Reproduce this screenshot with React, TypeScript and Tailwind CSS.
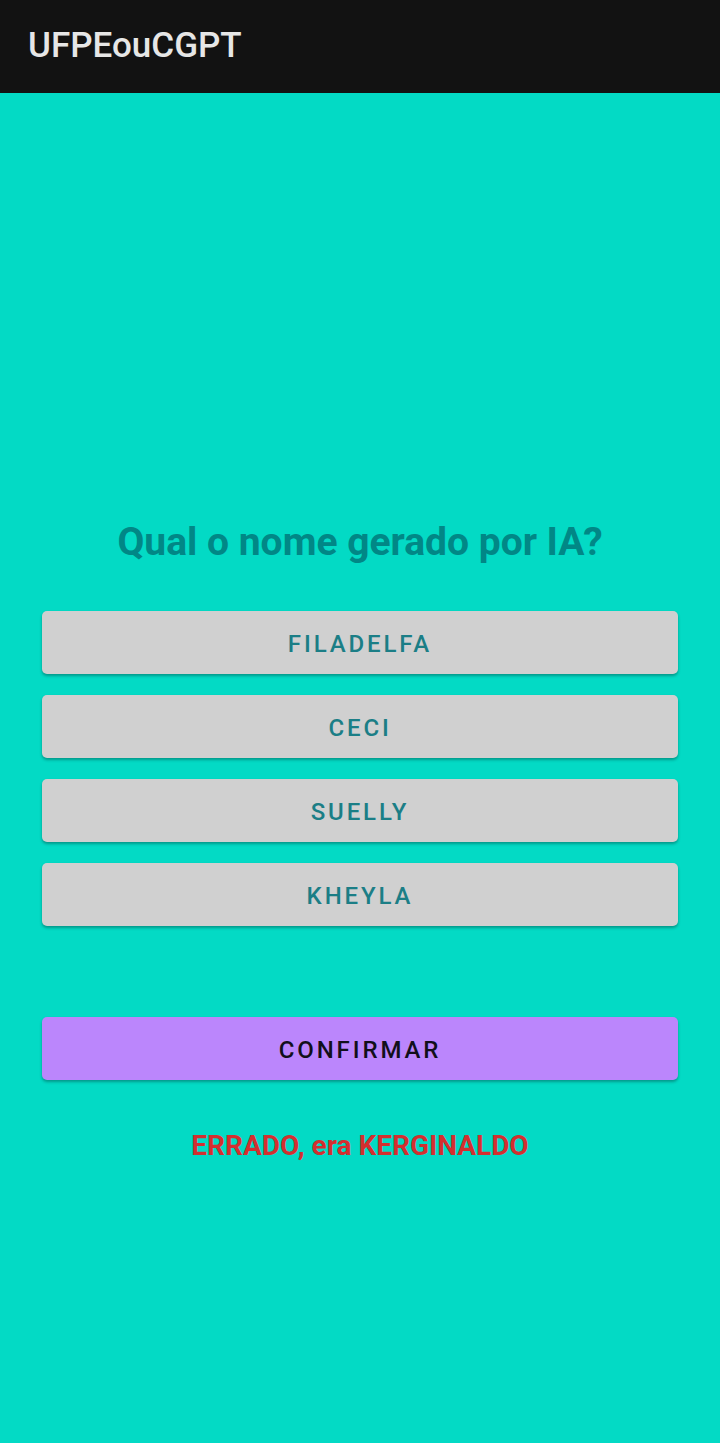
export default function App() {
  const options = ["FILADELFA", "CECI", "SUELLY", "KHEYLA"];

  return (
    <div className="flex min-h-[1443px] flex-col bg-[#03dac5] font-['Roboto',sans-serif]">
      <header className="flex h-[93px] items-center bg-[#121212] px-7">
        <h1 className="text-[35px] font-medium text-[#e6e6e6]">UFPEouCGPT</h1>
      </header>

      <main className="flex flex-col px-[42px] pt-[424px]">
        <h2 className="text-center text-[39px] font-bold leading-[50px] text-[#018786]">
          Qual o nome gerado por IA?
        </h2>

        <div className="mt-[44px] flex flex-col gap-[21px]">
          {options.map((name) => (
            <button
              key={name}
              className="h-[63px] rounded-[5px] bg-[#d0d0d0] pt-[3px] text-[24px] font-medium tracking-[0.12em] text-[#1b7e86] shadow-[0_2px_3px_rgba(0,0,0,0.3)]"
            >
              {name}
            </button>
          ))}
        </div>

        <button className="mt-[91px] h-[63px] rounded-[5px] bg-[#bb86fc] pt-[3px] text-[24px] font-medium tracking-[0.12em] text-[#120f1a] shadow-[0_2px_3px_rgba(0,0,0,0.3)]">
          CONFIRMAR
        </button>

        <p className="mt-[45px] text-center text-[28px] font-bold text-[#d32f2f]">
          ERRADO, era KERGINALDO
        </p>
      </main>
    </div>
  );
}
